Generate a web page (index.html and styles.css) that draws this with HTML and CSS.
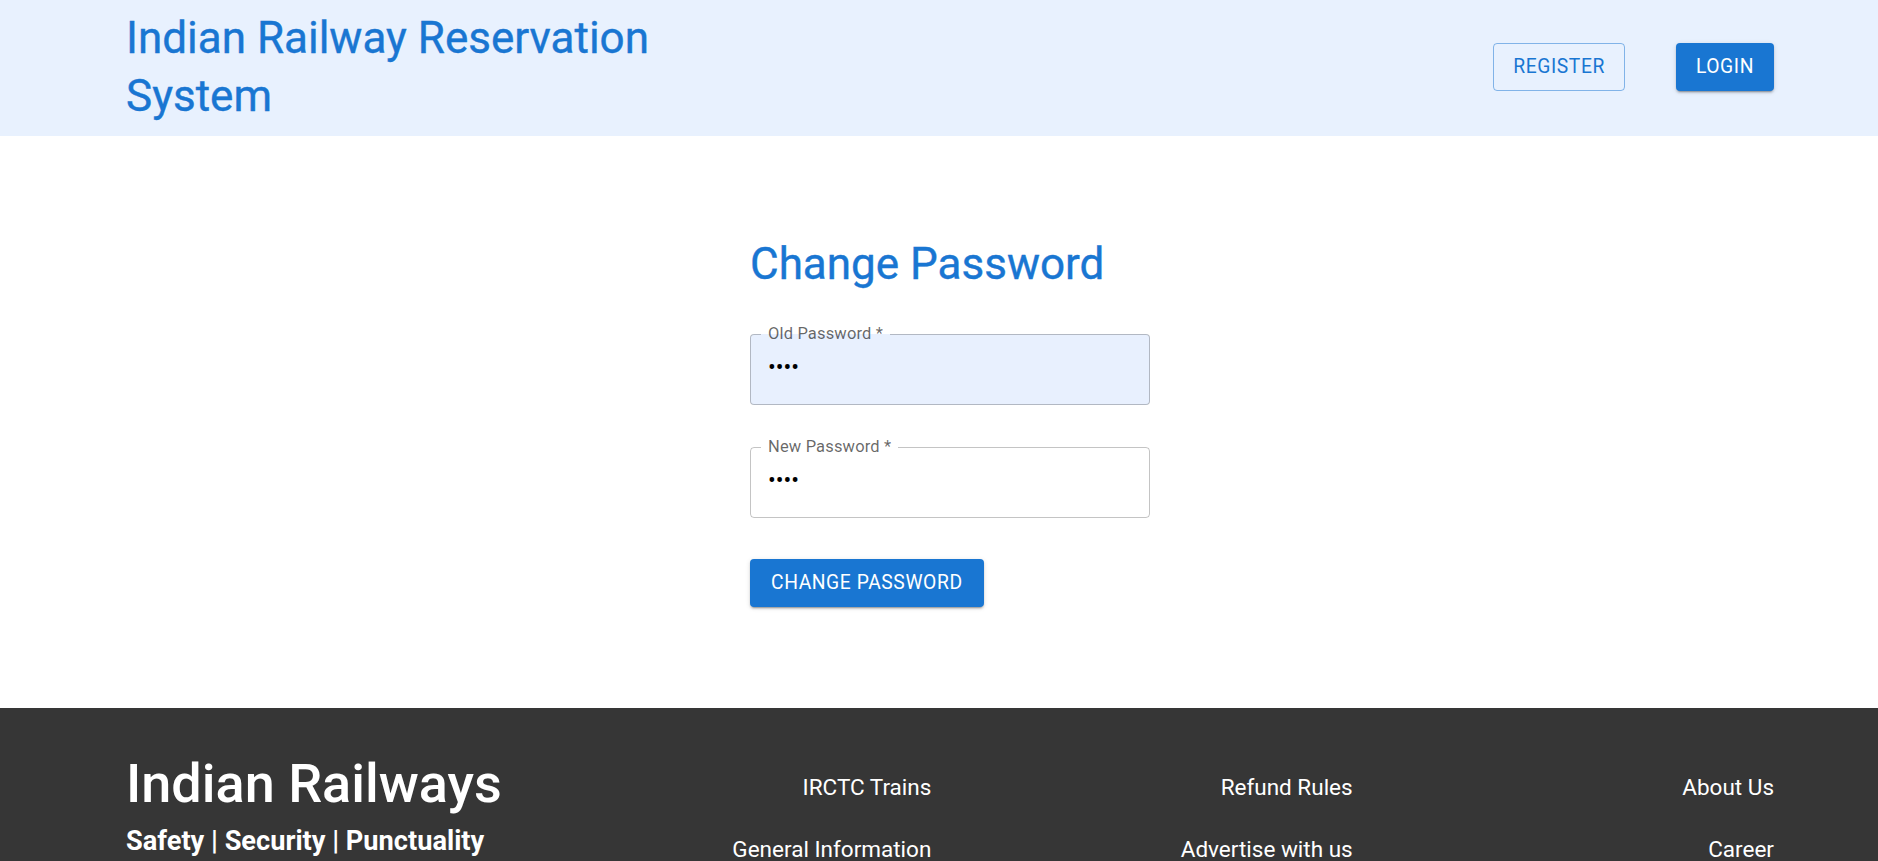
FILE: index.html
```html
<!DOCTYPE html>
<html lang="en">
<head>
<meta charset="utf-8">
<title>Change Password - Indian Railway Reservation System</title>
<link rel="stylesheet" href="styles.css">
</head>
<body>
<header class="topbar">
  <h1 class="brand">Indian Railway Reservation System</h1>
  <nav class="nav-actions">
    <button class="btn btn-outlined" type="button">Register</button>
    <button class="btn btn-contained" type="button">Login</button>
  </nav>
</header>

<main class="page">
  <form class="pw-form">
    <h2 class="pw-title">Change Password</h2>
    <fieldset class="field field-filled">
      <legend class="field-label">Old Password *</legend>
      <input class="field-input" type="password" value="1234" aria-label="Old Password">
    </fieldset>
    <fieldset class="field field-second">
      <legend class="field-label">New Password *</legend>
      <input class="field-input" type="password" value="1234" aria-label="New Password">
    </fieldset>
    <button class="btn btn-contained btn-submit" type="button">Change Password</button>
  </form>
</main>

<footer class="footer">
  <div class="footer-brand">
    <h2 class="footer-title">Indian Railways</h2>
    <p class="footer-tagline">Safety | Security | Punctuality</p>
  </div>
  <ul class="footer-col">
    <li><a href="#">IRCTC Trains</a></li>
    <li><a href="#">General Information</a></li>
    <li><a href="#">Important Information</a></li>
  </ul>
  <ul class="footer-col">
    <li><a href="#">Refund Rules</a></li>
    <li><a href="#">Advertise with us</a></li>
    <li><a href="#">Agents</a></li>
  </ul>
  <ul class="footer-col">
    <li><a href="#">About Us</a></li>
    <li><a href="#">Career</a></li>
    <li><a href="#">Contact Us</a></li>
  </ul>
</footer>
</body>
</html>
```
FILE: styles.css
```css
html {
  scrollbar-width: none;
}
html::-webkit-scrollbar {
  display: none;
}
body {
  margin: 0;
  font-family: Roboto, "Liberation Sans", Arial, sans-serif;
  background: #ffffff;
  color: rgba(0, 0, 0, 0.87);
}

/* ---------- header ---------- */
.topbar {
  display: flex;
  align-items: center;
  justify-content: space-between;
  padding: 9px 104px 11px 126px;
  background: #e8f1fe;
}
.brand {
  margin: 0;
  width: 560px;
  font-size: 44px;
  line-height: 58px;
  font-weight: 400;
  color: #1976d2;
  -webkit-text-stroke: 0.4px #1976d2;
}
.nav-actions {
  display: flex;
  gap: 51px;
}

/* ---------- buttons ---------- */
.btn {
  font-family: Roboto, "Liberation Sans", Arial, sans-serif;
  font-size: 19.3px;
  font-weight: 400;
  line-height: 34px;
  letter-spacing: 0.03em;
  text-transform: uppercase;
  border-radius: 4px;
  cursor: pointer;
}
.btn-outlined {
  padding: 6px 19px;
  background: transparent;
  color: #1976d2;
  border: 1px solid rgba(25, 118, 210, 0.5);
}
.btn-contained {
  padding: 7px 20px;
  border: 0;
  background: #1976d2;
  color: #ffffff;
  box-shadow: 0 3px 1px -2px rgba(0, 0, 0, 0.2), 0 2px 2px 0 rgba(0, 0, 0, 0.14), 0 1px 5px 0 rgba(0, 0, 0, 0.12);
}

/* ---------- main form ---------- */
.page {
  padding: 103px 104px 101px 126px;
}
.pw-form {
  width: 400px;
  margin: 0 auto;
  display: flex;
  flex-direction: column;
  align-items: flex-start;
}
.pw-title {
  margin: 0 0 34px;
  font-size: 44px;
  line-height: 51px;
  font-weight: 400;
  color: #1976d2;
  -webkit-text-stroke: 0.4px #1976d2;
}
.field {
  box-sizing: border-box;
  width: 100%;
  margin: 0;
  padding: 0 17px;
  border: 1px solid rgba(0, 0, 0, 0.23);
  border-radius: 4px;
  min-width: 0;
}
.field-filled {
  background: #e8f0fe;
}
.field-second {
  margin-top: 32px;
}
.field-label {
  margin-left: -7px;
  padding: 0 7px;
  font-size: 16.5px;
  line-height: 20px;
  color: rgba(0, 0, 0, 0.6);
  letter-spacing: 0.00938em;
}
.field-input {
  display: block;
  box-sizing: border-box;
  width: 100%;
  height: 60px;
  margin: 0;
  padding: 11px 0 24px;
  border: 0;
  outline: none;
  background: transparent;
  font-family: Roboto, "Liberation Sans", Arial, sans-serif;
  font-size: 23px;
  line-height: 25px;
  color: #000000;
}
.btn-submit {
  margin-top: 41px;
  padding: 7px 21px;
}

/* ---------- footer ---------- */
.footer {
  display: grid;
  grid-template-columns: 384px repeat(3, 1fr);
  padding: 43px 104px 40px 126px;
  background: #363636;
  color: #ffffff;
}
.footer-title {
  margin: 0;
  font-size: 54px;
  line-height: 65px;
  font-weight: 500;
}
.footer-tagline {
  margin: 8px 0 0;
  font-size: 27.2px;
  line-height: 34px;
  font-weight: 700;
}
.footer-col {
  list-style: none;
  margin: 0;
  padding: 20px 0 0;
  display: flex;
  flex-direction: column;
  align-items: flex-end;
  gap: 29px;
}
.footer-col a {
  color: #ffffff;
  text-decoration: none;
  font-size: 22.5px;
  line-height: 33px;
}
```
